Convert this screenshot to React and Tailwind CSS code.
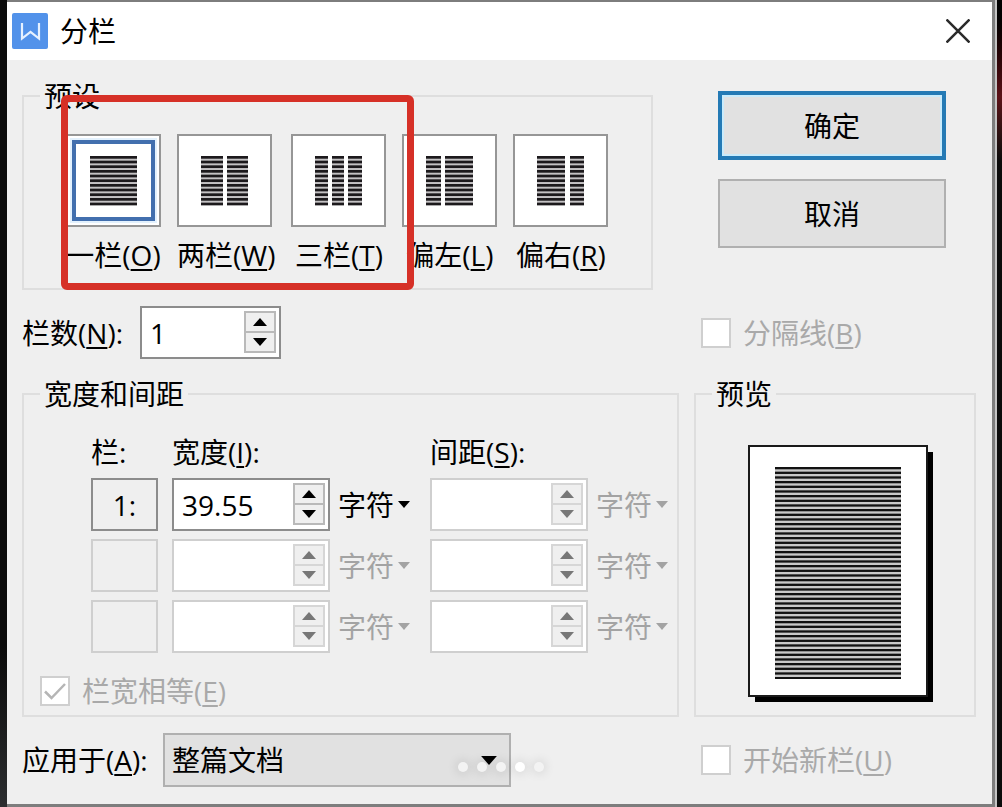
import React, { useState } from "react";

const PRESETS = [
  { id: "one", text: "一栏", hotkey: "O", columns: [[0, 47]] },
  { id: "two", text: "两栏", hotkey: "W", columns: [[0, 22], [26, 21]] },
  { id: "three", text: "三栏", hotkey: "T", columns: [[0, 13], [17, 12], [33, 14]] },
  { id: "left", text: "偏左", hotkey: "L", columns: [[0, 15], [19, 28]] },
  { id: "right", text: "偏右", hotkey: "R", columns: [[0, 28], [33, 14]] },
];

const ROWS = [
  { id: 1, name: "1:", width: "39.55", active: true },
  { id: 2, name: "", width: "", active: false },
  { id: 3, name: "", width: "", active: false },
];

// 14 / 3 is the distance between two text lines
const lineTops = (count) => Array.from({ length: count }, (_, i) => (i * 14) / 3);

const Hotkey = ({ children }) => (
  <>
    (<u className="underline decoration-2 underline-offset-[3px]">{children}</u>)
  </>
);

const Arrow = ({ up, className }) => (
  <svg viewBox="0 0 14 8" className={className} fill="currentColor" aria-hidden="true">
    <path d={up ? "M7 0 14 8H0z" : "M0 0h14L7 8z"} />
  </svg>
);

const Group = ({ title, className, children }) => (
  <fieldset className={`min-w-0 border-2 border-[#dedede] px-4 ${className}`}>
    <legend className="px-1 leading-7">{title}</legend>
    {children}
  </fieldset>
);

const PresetTile = ({ preset, checked, onSelect }) => (
  <label className="flex w-min min-w-[95px] flex-col gap-2.5 text-center">
    <input
      type="radio"
      name="preset"
      className="sr-only"
      checked={checked}
      onChange={() => onSelect(preset.id)}
    />
    <span className="grid h-[93px] w-[95px] border-2 border-[#969696] bg-white p-1">
      <span
        className={`grid place-items-center border-4 ${
          checked ? "border-[#426fae] outline-2 outline-[#e3f1fd]" : "border-transparent"
        }`}
      >
        <svg viewBox="0 0 47 50" className="h-[50px] w-[47px]" aria-hidden="true">
          {preset.columns.map(([x, width]) => (
            <g key={x}>
              <rect x={x} y="1" width={width} height="48" fill="#c4c2c4" />
              {lineTops(11).map((y) => (
                <rect key={y} x={x} y={y} width={width} height="2.7" fill="#1c191c" />
              ))}
            </g>
          ))}
        </svg>
      </span>
    </span>
    <span className="leading-9 whitespace-nowrap">
      {preset.text}
      <Hotkey>{preset.hotkey}</Hotkey>
    </span>
  </label>
);

const Spinner = ({ id, label, value, disabled, className }) => {
  const button = disabled
    ? "border-[#d6d6d6] text-[#777777]"
    : "border-[#b9b9b9] text-black";

  return (
    <div
      className={`flex h-[53px] border-2 bg-white ${
        disabled ? "border-[#cfcfcf]" : "border-[#8c8c8c]"
      } ${className}`}
    >
      <input
        id={id}
        type="text"
        aria-label={label}
        defaultValue={value}
        disabled={disabled}
        className="w-0 min-w-0 flex-1 pl-2 outline-none"
      />
      <div className="mt-[3px] mr-[3px] mb-1 flex w-8 flex-col bg-[#efefef]">
        <button
          type="button"
          aria-label="+"
          disabled={disabled}
          className={`grid flex-1 place-items-center border-2 border-b-0 ${button}`}
        >
          <Arrow up className="h-2 w-3.5" />
        </button>
        <button
          type="button"
          aria-label="-"
          disabled={disabled}
          className={`grid flex-1 place-items-center border-2 ${button}`}
        >
          <Arrow className="h-2 w-3.5" />
        </button>
      </div>
    </div>
  );
};

const UnitSelect = ({ label, disabled }) => (
  <div
    className={`relative flex w-[72px] items-center ${
      disabled ? "text-[#a3a3a3]" : "text-black"
    }`}
  >
    <select
      aria-label={label}
      disabled={disabled}
      className="w-full appearance-none opacity-100 outline-none"
    >
      <option>字符</option>
    </select>
    <Arrow className="pointer-events-none absolute right-0 h-[7px] w-3" />
  </div>
);

const Check = ({ text, hotkey, checked }) => (
  <label className="flex items-center gap-3 leading-9 text-[#a9a9a9]">
    <span className="relative size-[30px] shrink-0">
      <input
        type="checkbox"
        defaultChecked={checked}
        disabled
        className="block size-full appearance-none border-2 border-[#cfcfcf] bg-white"
      />
      {checked && (
        <svg
          viewBox="0 0 30 30"
          className="absolute inset-0"
          fill="none"
          stroke="#b5b5b5"
          strokeWidth="2.5"
          aria-hidden="true"
        >
          <path d="M5 15.5 11.5 22 25 8" />
        </svg>
      )}
    </span>
    <span>
      {text}
      <Hotkey>{hotkey}</Hotkey>
    </span>
  </label>
);

const PagePreview = () => (
  <div className="mt-[37px] ml-9 w-[180px] border-2 border-[#1a1a1a] bg-white px-[25px] pt-5 pb-4 shadow-[6px_6px_0_-1px_#000]">
    <svg viewBox="0 0 126 212" className="block h-[212px] w-full" aria-hidden="true">
      <rect y="1" width="126" height="210" fill="#c8c8c8" />
      {lineTops(46).map((y) => (
        <rect key={y} y={y} width="126" height="2.3" fill="#111111" />
      ))}
    </svg>
  </div>
);

const TitleBar = () => (
  <header className="flex h-[58px] items-center bg-white pr-[22px] pl-[5px]">
    <svg viewBox="0 0 36 36" className="mr-3 size-9" aria-hidden="true">
      <rect width="36" height="36" rx="2" fill="#5292ea" />
      <path
        d="M10 10v15.500l8.500-6.500 8.500 6.500V10"
        fill="none"
        stroke="#e6f1ff"
        strokeWidth="2.200"
      />
    </svg>
    <h1 className="flex-1">分栏</h1>
    <button type="button" aria-label="关闭">
      <svg
        viewBox="0 0 24 24"
        className="size-6"
        fill="none"
        stroke="#2a2a2a"
        strokeWidth="2.5"
        aria-hidden="true"
      >
        <path d="M0.500 0.500l23 23M23.500 0.500l-23 23" />
      </svg>
    </button>
  </header>
);

const Dots = () => (
  <div className="absolute bottom-[35px] left-1/2 flex -translate-x-1/2 gap-[9px]">
    {[0, 1, 2, 3, 4].map((i) => (
      <span
        key={i}
        className={`size-2.5 rounded-full shadow-[0_0_12px_rgba(0,0,0,0.2)] ${
          i === 3 ? "bg-white" : "bg-[#f3f3f3]"
        }`}
      />
    ))}
  </div>
);

const App = () => {
  const [preset, setPreset] = useState("one");

  return (
    <div className="relative flex min-h-screen bg-[#0b0b0b] font-['Open_Sans','Noto_Sans_CJK_SC',sans-serif] text-[28px] leading-9 text-black">
      <div className="w-[7px] shrink-0 bg-linear-to-b from-[#0b0b0b] from-80% to-[#2c2e30]" />

      <div className="min-w-0 flex-1 border-t-2 border-r-3 border-b-3 border-[#7d7d7d] bg-[#efefef]">
        <TitleBar />

        <main className="grid grid-cols-[minmax(0,1fr)_282px] gap-x-[15px] pt-[22px] pr-4 pb-4 pl-[15px]">
          <div className="relative mr-[26px]">
            <Group title="预设" className="h-[208px]">
              <div className="flex gap-4 pt-6 pl-[26px]">
                {PRESETS.map((item) => (
                  <PresetTile
                    key={item.id}
                    preset={item}
                    checked={preset === item.id}
                    onSelect={setPreset}
                  />
                ))}
              </div>
            </Group>
            <div className="pointer-events-none absolute top-[13px] left-[39px] h-[195px] w-[353px] rounded-md border-7 border-[#d63027]" />
          </div>

          <div className="flex flex-col gap-[19px] pt-[9px] pr-[30px] pl-6">
            <button
              type="button"
              className="h-[69px] border-4 border-[#247ab5] bg-[#e1e1e1] inset-ring-2 inset-ring-[#c9ebfb]"
            >
              确定
            </button>
            <button type="button" className="h-[69px] border-2 border-[#b0b0b0] bg-[#e1e1e1]">
              取消
            </button>
          </div>

          <div className="mt-4 flex items-center">
            <label htmlFor="count" className="w-[118px]">
              栏数
              <Hotkey>N</Hotkey>:
            </label>
            <Spinner id="count" value="1" className="w-[141px]" />
          </div>

          <div className="mt-4 flex items-center pl-[7px]">
            <Check text="分隔线" hotkey="B" />
          </div>

          <Group title="宽度和间距" className="mt-[21px] pb-1.5">
            <div className="grid grid-cols-[67px_244px_auto] gap-x-[14px] gap-y-2 pt-[26px] pl-[51px]">
              <span>栏:</span>
              <label htmlFor="width-1">
                宽度
                <Hotkey>I</Hotkey>:
              </label>
              <label htmlFor="gap-1">
                间距
                <Hotkey>S</Hotkey>:
              </label>

              {ROWS.map((row) => (
                <React.Fragment key={row.id}>
                  <div
                    className={`grid h-[53px] place-items-center border-2 ${
                      row.active ? "border-[#8c8c8c]" : "border-[#cfcfcf]"
                    }`}
                  >
                    {row.name}
                  </div>
                  <div className="flex gap-2">
                    <Spinner
                      id={`width-${row.id}`}
                      label="宽度"
                      value={row.width}
                      disabled={!row.active}
                      className="w-[158px]"
                    />
                    <UnitSelect label="宽度" disabled={!row.active} />
                  </div>
                  <div className="flex gap-2">
                    <Spinner
                      id={`gap-${row.id}`}
                      label="间距"
                      value=""
                      disabled
                      className="w-[158px]"
                    />
                    <UnitSelect label="间距" disabled />
                  </div>
                </React.Fragment>
              ))}
            </div>
            <div className="mt-5">
              <Check text="栏宽相等" hotkey="E" checked />
            </div>
          </Group>

          <Group title="预览" className="mt-[21px]">
            <PagePreview />
          </Group>

          <div className="mt-4 flex items-center">
            <label htmlFor="apply" className="w-[141px]">
              应用于
              <Hotkey>A</Hotkey>:
            </label>
            <div className="relative flex w-[348px] items-center">
              <select
                id="apply"
                className="h-[54px] w-full appearance-none border-2 border-[#b0b0b0] bg-[#e1e1e1] pl-[7px] text-black outline-none"
              >
                <option>整篇文档</option>
              </select>
              <Arrow className="pointer-events-none absolute right-3.5 h-[9px] w-4" />
            </div>
          </div>

          <div className="mt-4 flex items-center pl-[7px]">
            <Check text="开始新栏" hotkey="U" />
          </div>
        </main>
      </div>

      <div className="w-[7px] shrink-0 border-l-2 border-[#c4c4c4] bg-linear-to-b from-black via-[#5c1218] via-12% to-[#0b0b0b] to-20%" />
      <Dots />
    </div>
  );
};

export default App;
